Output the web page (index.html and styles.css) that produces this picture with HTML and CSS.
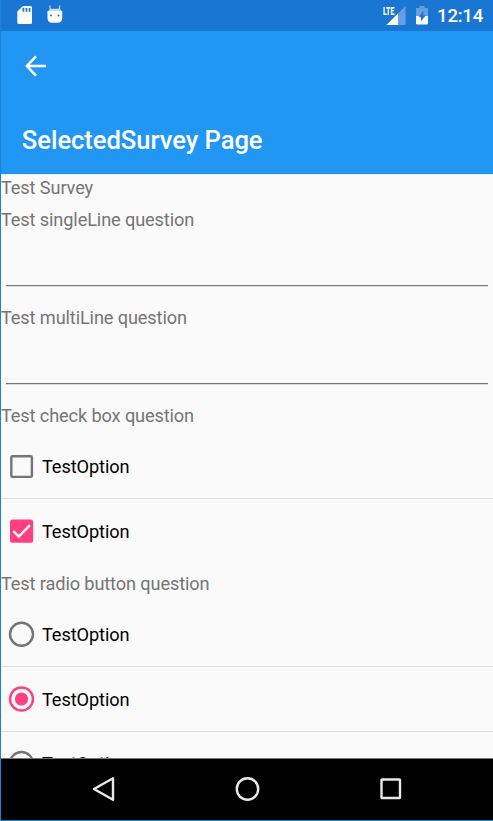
FILE: index.html
```html
<!DOCTYPE html>
<html lang="en">
<head>
<meta charset="utf-8">
<title>SelectedSurvey Page</title>
<link rel="stylesheet" href="styles.css">
</head>
<body>
<div class="screen">
  <header class="status">
    <svg class="sd" width="16" height="19" viewBox="0 0 16 19"><path fill="#fff" fill-rule="evenodd" d="M6 0H13.500Q15 0 15 1.500V16.500Q15 18 13.500 18H1.800Q.3 18 .3 16.500V5.500ZM5.500 2V5.800H7.300V2ZM8.600 2V5.800H10.400V2ZM11.700 2V5.800H13.400V2Z"/></svg>
    <svg class="droid" width="16" height="19" viewBox="0 0 16 19"><path d="M3.300 4 2.700.3M12.300 4 12.900.3" stroke="#fff" stroke-opacity=".8" stroke-width="1.100"/><path fill="#fff" d="M.5 7.500H15.200V13Q15.200 17.700 10.500 17.700H5.200Q.5 17.700 .5 13Z"/><path fill="#c5dcf4" d="M3 3.800H12.700L14.800 6.600H.9Z"/><path fill="#fff" d="M.5 6H15.200V8H.5Z"/><circle cx="4" cy="10.500" r="1" fill="#1976d2"/><circle cx="11.500" cy="10.500" r="1" fill="#1976d2"/></svg>
    <span class="grow"></span>
    <span class="signal"><svg width="20" height="19" viewBox="0 0 20 19"><path fill="#659fe0" d="M19.500 0V19H.5Z"/><path fill="#fff" d="M12 7.500V19H.5Z"/></svg><span class="lte">LTE</span></span>
    <svg class="battery" width="12" height="19" viewBox="0 0 12 19"><path fill="#659fe0" d="M3.500 0H8.500V2H12V10H0V2H3.500Z"/><path fill="#fff" d="M0 10H12V17.200Q12 18.500 10.700 18.500H1.300Q0 18.500 0 17.200Z"/><path fill="#1976d2" d="M7.400 4.500V9.500H9.600L5 15.500V11.300H2.800Z"/></svg>
    <span class="clock">12:14</span>
  </header>
  <div class="appbar">
    <svg class="back" width="22" height="22" viewBox="0 0 22 22" fill="none" stroke="#fff" stroke-width="2.500"><path d="M22 11H3M12 1.400 2.900 11 12 20.600"/></svg>
    <h1>SelectedSurvey Page</h1>
  </div>
  <main>
    <p>Test Survey</p>
    <p>Test singleLine question</p>
    <div class="entry"></div>
    <p>Test multiLine question</p>
    <div class="entry"></div>
    <p>Test check box question</p>
    <div class="options">
      <div class="option"><svg width="26" height="26" viewBox="0 0 26 26"><rect x="3.300" y="2.300" width="20.600" height="20.600" rx="1.200" fill="none" stroke="#757575" stroke-width="2.400"/></svg>TestOption</div>
      <div class="option"><svg width="26" height="26" viewBox="0 0 26 26"><rect x="2" y=".5" width="23.200" height="23.200" rx="2.500" fill="#ff4081"/><path d="M5.300 12.200 10.800 17.500 22 6.100" fill="none" stroke="#fafafa" stroke-width="2.400"/></svg>TestOption</div>
    </div>
    <p>Test radio button question</p>
    <div class="options">
      <div class="option"><svg width="26" height="26" viewBox="0 0 26 26"><circle cx="13.500" cy="12.200" r="11.500" fill="none" stroke="#757575" stroke-width="2.400"/></svg>TestOption</div>
      <div class="option"><svg width="26" height="26" viewBox="0 0 26 26"><circle cx="13.500" cy="12" r="11.500" fill="none" stroke="#ff4081" stroke-width="2.400"/><circle cx="13.500" cy="12" r="6.600" fill="#ff4081"/></svg>TestOption</div>
      <div class="option clipped"><svg width="26" height="26" viewBox="0 0 26 26"><circle cx="13.500" cy="12.500" r="11.500" fill="none" stroke="#757575" stroke-width="2.400"/></svg>TestOption</div>
    </div>
  </main>
  <nav>
    <svg width="26" height="26" viewBox="0 0 26 26"><path d="M22 2.200V23.800L3 13Z"/></svg>
    <svg width="26" height="26" viewBox="0 0 26 26"><circle cx="12.500" cy="13" r="10.700"/></svg>
    <svg width="26" height="26" viewBox="0 0 26 26"><rect x="3.500" y="3.500" width="18.500" height="18.500" rx=".5"/></svg>
  </nav>
</div>
</body>
</html>
```
FILE: styles.css
```css
* { box-sizing: border-box; }
body { margin: 0; font-family: Roboto, sans-serif; }
svg { display: block; flex: none; overflow: visible; }
.screen {
  display: flex;
  flex-direction: column;
  height: 821px;
  overflow: hidden;
  border-left: 1px solid #1883d7;
  border-bottom: 1px solid #1883d7;
  background: #fafafa;
}
.status {
  display: flex;
  align-items: flex-start;
  flex: none;
  height: 31px;
  padding: 6px 10px 0 15.500px;
  background: #1976d2;
  color: #fff;
}
.droid { margin-left: 14.500px; margin-top: -1px; }
.grow { flex: 1; }
.signal { position: relative; margin-right: 10px; }
.lte {
  position: absolute;
  left: -3.500px;
  top: 0;
  padding-right: 1px;
  background: #1976d2;
  font: 900 11.500px/10px "Roboto", sans-serif;
  transform: scaleX(.6);
  transform-origin: left;
}
.clock {
  margin-left: 9px;
  font-size: 18.500px;
  font-weight: 500;
  line-height: 21px;
  letter-spacing: -.2px;
}
.appbar {
  flex: none;
  height: 143px;
  padding: 24px 21px 0 23px;
  background: #2196f3;
  color: #fff;
}
h1 {
  margin: 47px 0 0 -2.200px;
  font-size: 25.600px;
  font-weight: 500;
  line-height: 32px;
  letter-spacing: -.05px;
}
main {
  flex: none;
  height: 584px;
  overflow: hidden;
  box-shadow: inset 0 1px #e3edf6;
  font-size: 18.200px;
  letter-spacing: -.13px;
}
p {
  margin: 0 0 6px;
  height: 26px;
  line-height: 28px;
  color: #757575;
}
.entry {
  height: 48px;
  margin: 0 5px 18px;
  border-bottom: 1px solid #757575;
  box-shadow: 0 1px #dcdcdc;
}
.options { margin-bottom: 6px; }
.option {
  display: flex;
  align-items: center;
  gap: 8px;
  height: 65px;
  padding: 0 0 0 7px;
  border-bottom: 1px solid #dedede;
  color: #000;
  letter-spacing: -.1px;
}
.option svg { margin-top: 2px; }
.option:last-child { border-bottom-color: transparent; }
.clipped { padding-bottom: 2px; }
nav {
  display: flex;
  align-items: center;
  justify-content: space-between;
  flex: 1;
  padding: 0 89px 1px 90px;
  border-top: 1px solid #757575;
  background: #000;
}
nav svg { fill: none; stroke: #e8e8e8; stroke-width: 2.400; stroke-linejoin: round; }
```
